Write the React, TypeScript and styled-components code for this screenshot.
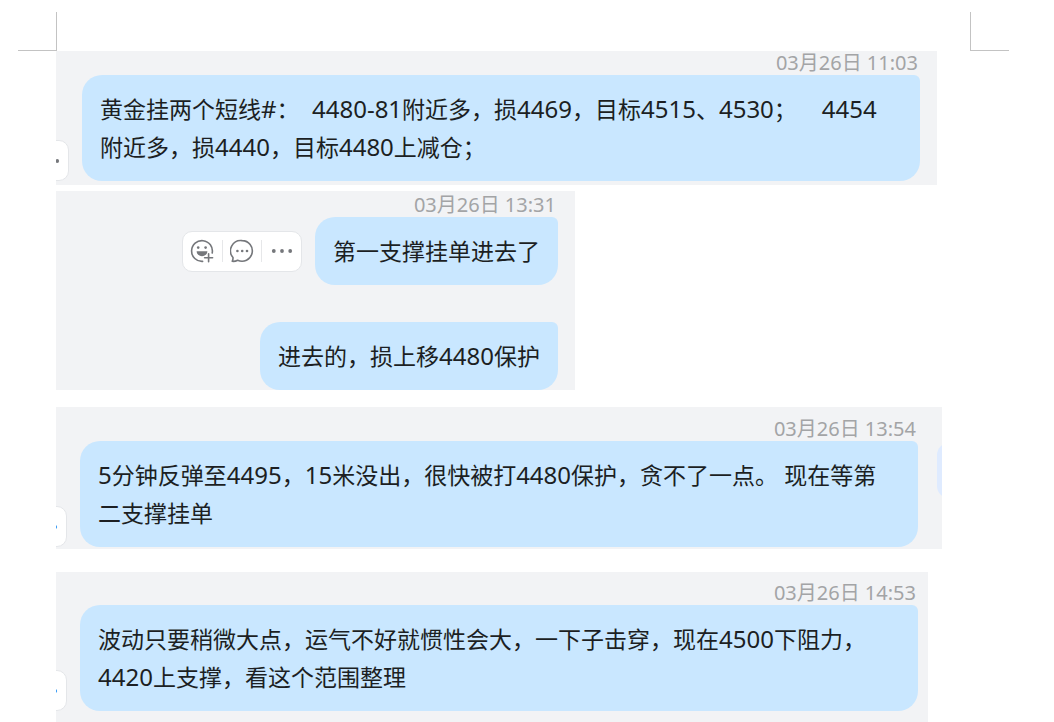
import React from "react";
import styled, { createGlobalStyle } from "styled-components";

const GlobalStyle = createGlobalStyle`
  *, *::before, *::after { box-sizing: border-box; }
  body {
    margin: 0;
    background: #ffffff;
    overflow: hidden;
    font-family: "Noto Sans", "Noto Sans CJK SC", sans-serif;
  }
`;

const Page = styled.main`
  display: flex;
  flex-direction: column;
`;

const CropMarks = styled.div`
  display: flex;
  justify-content: space-between;
  padding: 12px 45px 0 18px;
`;

const CropMark = styled.span<{ $side: "left" | "right" }>`
  width: 39px;
  height: 39px;
  border: 0 solid #c3c3c3;
  border-bottom-width: 1px;
  ${({ $side }) => ($side === "left" ? "border-right-width: 1px;" : "border-left-width: 1px;")}
`;

const Clips = styled.div`
  display: flex;
  flex-direction: column;
  padding-left: 56px;
`;

const Clip = styled.section<{ $width: number; $inset: number; $after?: number; $bottom?: number }>`
  position: relative;
  width: 100%;
  max-width: ${({ $width }) => $width}px;
  margin-bottom: ${({ $after = 0 }) => $after}px;
  padding: 0 ${({ $inset }) => $inset}px ${({ $bottom = 0 }) => $bottom}px 0;
  background: #f2f3f5;
  overflow: hidden;
`;

const Time = styled.time<{ $height: number }>`
  display: flex;
  justify-content: flex-end;
  align-items: flex-end;
  height: ${({ $height }) => $height}px;
  padding-right: 2px;
  font-size: 20px;
  line-height: 24px;
  color: #a3a4a6;
  white-space: pre;
`;

const Row = styled.div<{ $gap: number; $before?: number; $align?: string }>`
  display: flex;
  justify-content: flex-end;
  align-items: ${({ $align = "flex-end" }) => $align};
  gap: ${({ $gap }) => $gap}px;
  margin-top: ${({ $before = 0 }) => $before}px;
`;

const BubbleBox = styled.p<{ $fill?: boolean }>`
  flex: ${({ $fill }) => ($fill ? "1 1 0" : "0 0 auto")};
  min-width: 0;
  margin: 0;
  padding: 15px 18px;
  border-radius: 20px 6px 20px 20px;
  background: #c9e7ff;
  color: #1c1f23;
  font-size: 23px;
  line-height: 38px;
  white-space: pre-wrap;
`;

const Latin = styled.span`
  font-size: 24px;
  line-height: 24px;
`;

const Toolbar = styled.div<{ $active?: boolean }>`
  display: flex;
  flex: none;
  align-items: center;
  width: 120px;
  height: 41px;
  border: 1px solid #e4e6e9;
  border-radius: 10px;
  background: #ffffff;
  color: ${({ $active }) => ($active ? "#3b9cf5" : "#75777b")};
`;

const ToolButton = styled.button`
  display: flex;
  flex: 1;
  align-items: center;
  justify-content: center;
  height: 22px;
  padding: 0;
  border: 0;
  background: none;
  color: inherit;

  & + & {
    border-left: 1px solid #e6e7e9;
  }
`;

const ToolbarEdge = styled.div<{ $width: number }>`
  display: flex;
  flex: none;
  justify-content: flex-end;
  width: ${({ $width }) => $width}px;
  overflow: hidden;
`;

const NextBubbleEdge = styled.span`
  position: absolute;
  top: 36px;
  left: calc(100% - 5px);
  width: 40px;
  height: 55px;
  border-radius: 12px;
  background: #dfebff;
`;

/* Digits and other ASCII runs are set one size up from the Chinese text. */
function Bubble({ text, fill }: { text: string; fill?: boolean }) {
  return (
    <BubbleBox $fill={fill}>
      {text
        .split(/([ -~]+)/)
        .map((part, i) => (i % 2 ? <Latin key={i}>{part}</Latin> : part))}
    </BubbleBox>
  );
}

function SmileIcon() {
  return (
    <svg width="24" height="24" viewBox="0 0 24 24" fill="none" stroke="currentColor" strokeWidth="1.6" strokeLinecap="round" aria-hidden="true">
      <path d="M12.6 22.4A10.4 10.4 0 1 1 22.2 14" />
      <circle cx="8.2" cy="8.6" r="1.3" fill="currentColor" stroke="none" />
      <circle cx="15.6" cy="8.6" r="1.3" fill="currentColor" stroke="none" />
      <path d="M6.6 12.2h10.8a5.4 5 0 0 1-10.8 0Z" fill="currentColor" stroke="none" />
      <path d="M18.6 14.8v8M14.6 18.8h8" />
    </svg>
  );
}

function CommentIcon() {
  return (
    <svg width="24" height="24" viewBox="0 0 24 24" fill="none" stroke="currentColor" strokeWidth="1.6" strokeLinejoin="round" aria-hidden="true">
      <path d="M12.2 1.6a10.3 10.3 0 1 1-4.6 19.6c-1.5.9-3.3 1.3-5.4 1.1.7-1.2.9-2.5.8-3.8A10.3 10.3 0 0 1 12.2 1.6Z" />
      <g fill="currentColor" stroke="none">
        <circle cx="7.4" cy="12" r="1.3" />
        <circle cx="12.2" cy="12" r="1.3" />
        <circle cx="17" cy="12" r="1.3" />
      </g>
    </svg>
  );
}

function MoreIcon() {
  return (
    <svg width="24" height="24" viewBox="0 0 24 24" fill="currentColor" aria-hidden="true">
      <circle cx="3.8" cy="12" r="1.9" />
      <circle cx="12" cy="12" r="1.9" />
      <circle cx="20.2" cy="12" r="1.9" />
    </svg>
  );
}

function MessageTools({ active }: { active?: boolean }) {
  return (
    <Toolbar $active={active}>
      <ToolButton type="button" aria-label="表情">
        <SmileIcon />
      </ToolButton>
      <ToolButton type="button" aria-label="回复">
        <CommentIcon />
      </ToolButton>
      <ToolButton type="button" aria-label="更多">
        <MoreIcon />
      </ToolButton>
    </Toolbar>
  );
}

export default function App() {
  return (
    <>
      <GlobalStyle />
      <Page lang="zh-CN">
        <CropMarks>
          <CropMark $side="left" />
          <CropMark $side="right" />
        </CropMarks>
        <Clips>
          <Clip $width={881} $inset={17} $after={6} $bottom={4}>
            <Time $height={24}>03月26日 11:03</Time>
            <Row $gap={13}>
              <ToolbarEdge $width={13}>
                <MessageTools />
              </ToolbarEdge>
              <Bubble
                fill
                text={"黄金挂两个短线#：  4480-81附近多，损4469，目标4515、4530；    4454\n附近多，损4440，目标4480上减仓；"}
              />
            </Row>
          </Clip>

          <Clip $width={519} $inset={17} $after={17}>
            <Time $height={26}>03月26日 13:31</Time>
            <Row $gap={13} $align="center">
              <MessageTools />
              <Bubble text="第一支撑挂单进去了" />
            </Row>
            <Row $gap={13} $before={37}>
              <Bubble text="进去的，损上移4480保护" />
            </Row>
          </Clip>

          <Clip $width={886} $inset={24} $after={23} $bottom={2}>
            <Time $height={34}>03月26日 13:54</Time>
            <Row $gap={13}>
              <ToolbarEdge $width={11}>
                <MessageTools active />
              </ToolbarEdge>
              <Bubble
                fill
                text={"5分钟反弹至4495，15米没出，很快被打4480保护，贪不了一点。 现在等第\n二支撑挂单"}
              />
            </Row>
            <NextBubbleEdge />
          </Clip>

          <Clip $width={872} $inset={10} $bottom={12}>
            <Time $height={33}>03月26日 14:53</Time>
            <Row $gap={13}>
              <ToolbarEdge $width={11}>
                <MessageTools active />
              </ToolbarEdge>
              <Bubble
                fill
                text={"波动只要稍微大点，运气不好就惯性会大，一下子击穿，现在4500下阻力，\n4420上支撑，看这个范围整理"}
              />
            </Row>
          </Clip>
        </Clips>
      </Page>
    </>
  );
}
